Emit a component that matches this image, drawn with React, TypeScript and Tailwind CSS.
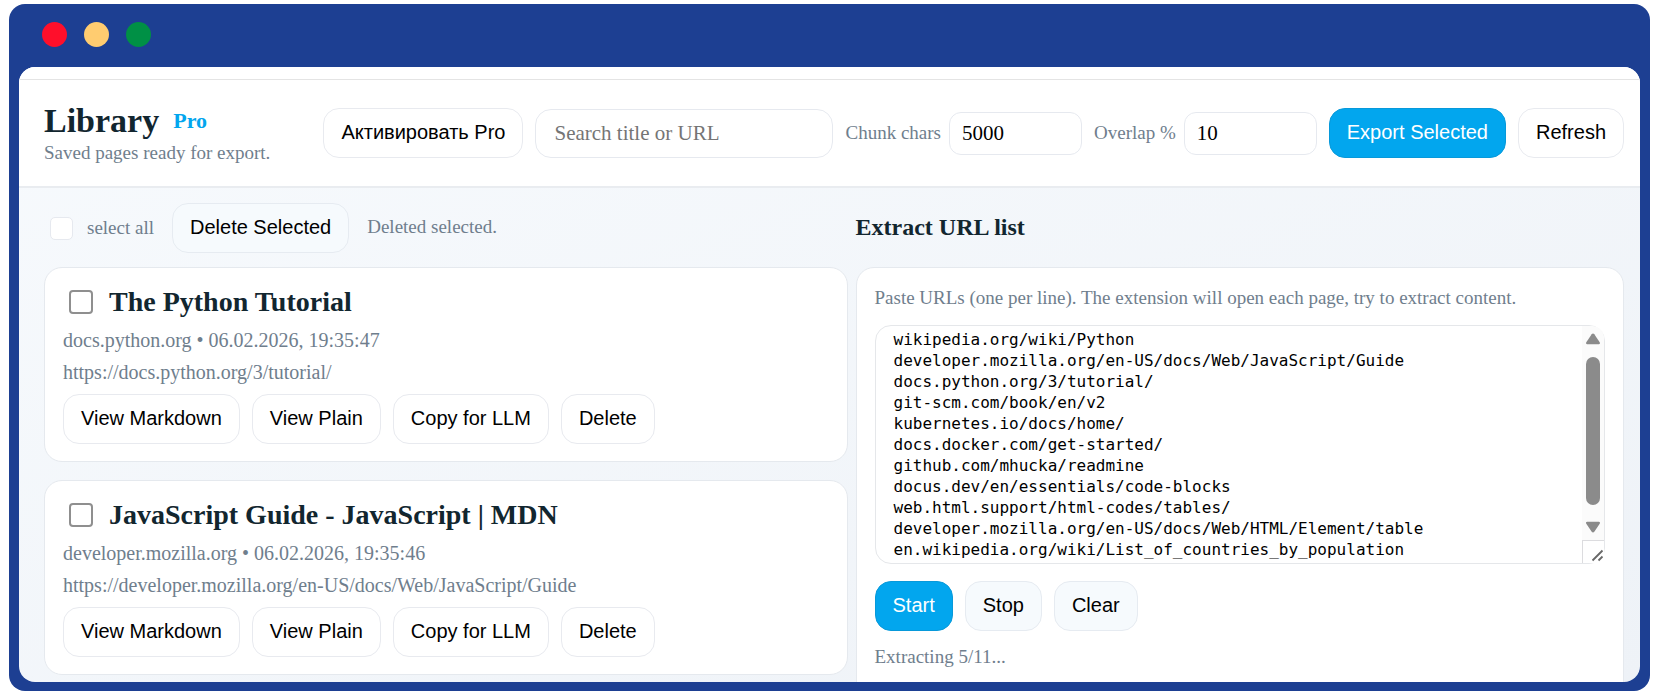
import { useState } from 'react'
import clsx from 'clsx'

interface SavedPage {
  id: string
  title: string
  host: string
  savedAt: string
  url: string
}

const PAGES: SavedPage[] = [
  {
    id: 'python',
    title: 'The Python Tutorial',
    host: 'docs.python.org',
    savedAt: '06.02.2026, 19:35:47',
    url: 'https://docs.python.org/3/tutorial/',
  },
  {
    id: 'mdn',
    title: 'JavaScript Guide - JavaScript | MDN',
    host: 'developer.mozilla.org',
    savedAt: '06.02.2026, 19:35:46',
    url: 'https://developer.mozilla.org/en-US/docs/Web/JavaScript/Guide',
  },
]

const URLS = [
  'wikipedia.org/wiki/Python',
  'developer.mozilla.org/en-US/docs/Web/JavaScript/Guide',
  'docs.python.org/3/tutorial/',
  'git-scm.com/book/en/v2',
  'kubernetes.io/docs/home/',
  'docs.docker.com/get-started/',
  'github.com/mhucka/readmine',
  'docus.dev/en/essentials/code-blocks',
  'web.html.support/html-codes/tables/',
  'developer.mozilla.org/en-US/docs/Web/HTML/Element/table',
  'en.wikipedia.org/wiki/List_of_countries_by_population',
].join('\n')

type Variant = 'plain' | 'tinted' | 'primary'

function Button({
  children,
  variant = 'plain',
  onClick,
}: {
  children: string
  variant?: Variant
  onClick?: () => void
}) {
  return (
    <button
      type="button"
      onClick={onClick}
      className={clsx(
        "h-[50px] shrink-0 whitespace-nowrap rounded-2xl border px-[17px] pb-0.5 font-['Liberation_Sans',Arial,sans-serif] text-[20px]",
        variant === 'plain' && 'border-[#e8eaef] bg-white text-black',
        variant === 'tinted' && 'border-[#e6ebf1] bg-[#f6fafd] text-black',
        variant === 'primary' && 'border-[#0799da] bg-[#02a6ee] text-white',
      )}
    >
      {children}
    </button>
  )
}

function NumberField({
  id,
  label,
  value,
  onChange,
}: {
  id: string
  label: string
  value: string
  onChange: (v: string) => void
}) {
  return (
    <div className="flex shrink-0 items-center gap-2">
      <label htmlFor={id} className="whitespace-nowrap text-[19px] text-[#6f7e8d]">
        {label}
      </label>
      <input
        id={id}
        value={value}
        onChange={(e) => onChange(e.target.value)}
        className="h-[43px] w-[133px] rounded-xl border border-[#e6e9ef] bg-white px-3 text-[21px] text-black"
      />
    </div>
  )
}

function PageCard({ page }: { page: SavedPage }) {
  return (
    <article className="rounded-[18px] border border-[#e5e9ee] bg-white px-[18px] pb-[17px] pt-4">
      <div className="flex h-9 items-center gap-4 pl-1.5">
        <input
          type="checkbox"
          id={page.id}
          className="size-6 shrink-0 appearance-none rounded-[4px] border-2 border-[#8f8f8f] bg-white"
        />
        <label htmlFor={page.id} className="text-[28px] font-bold text-[#12262f]">
          {page.title}
        </label>
      </div>
      <p className="mt-1 text-[20px] leading-8 text-[#6f7e8d]">
        {page.host} • {page.savedAt}
      </p>
      <p className="text-[20px] leading-8 text-[#6f7e8d]">{page.url}</p>
      <div className="mt-1.5 flex gap-3">
        <Button>View Markdown</Button>
        <Button>View Plain</Button>
        <Button>Copy for LLM</Button>
        <Button>Delete</Button>
      </div>
    </article>
  )
}

function Scrollbar() {
  return (
    <div className="absolute inset-y-px right-px flex w-[22px] flex-col rounded-tr-xl bg-[#fbfbfb]">
      <div className="flex flex-1 flex-col items-center justify-between py-[7px]">
        <svg width="16" height="12" viewBox="0 0 16 12" fill="#8b8b8b">
          <path d="M8 0.5c.5 0 .9.3 1.300.8l5.400 8c.6 1 .2 1.900-.9 1.900H2.200c-1.100 0-1.500-.9-.9-1.900l5.400-8C7.100.8 7.500.5 8 .5z" />
        </svg>
        <div className="mb-3 mt-3 w-3.5 flex-1 rounded-full bg-[#8b8b8b]" />
        <svg width="16" height="12" viewBox="0 0 16 12" fill="#8b8b8b" className="mt-1">
          <path d="M8 11.500c-.5 0-.9-.3-1.300-.8l-5.400-8C.7 1.700 1.100.8 2.200.8h11.600c1.100 0 1.500.9.9 1.900l-5.400 8c-.4.500-.8.800-1.300.8z" />
        </svg>
      </div>
      <div className="h-[23px] border-l border-t border-[#dcdcdf] bg-white">
        <svg width="21" height="21" viewBox="0 0 21 21" stroke="#686868" strokeWidth="1.8">
          <path d="M9.500 19.500L19.500 9.500M15.500 19.500L19.500 15.500" />
        </svg>
      </div>
    </div>
  )
}

export default function App() {
  const [query, setQuery] = useState('')
  const [chunk, setChunk] = useState('5000')
  const [overlap, setOverlap] = useState('10')
  const [urls, setUrls] = useState(URLS)

  return (
    <div className="h-screen overflow-hidden bg-white pb-[7px] pl-[9px] pr-1.5 pt-1 font-[Georgia,'Liberation_Serif',serif]">
      <div className="flex h-full flex-col rounded-2xl bg-[#1d3f92] px-2.5 pb-[9px]">
        <div className="flex h-[63px] shrink-0 items-center gap-[17px] pb-0.5 pl-[23px]">
          <span className="size-[25px] rounded-full bg-[#ff0f2b]" />
          <span className="size-[25px] rounded-full bg-[#ffcc70]" />
          <span className="size-[25px] rounded-full bg-[#009045]" />
        </div>

        <div className="min-h-0 flex-1 overflow-hidden rounded-2xl bg-linear-to-br from-[#f7fafd] to-[#eef2f7]">
          <div className="h-3 bg-white" />
          <header className="flex h-[109px] items-center gap-3 border-b-2 border-t border-b-[#e9ecf0] border-t-[#e4e4e4] bg-white pl-[25px] pr-4">
            <div className="mr-auto pt-1">
              <div className="flex items-center gap-3.5">
                <h1 className="text-[34px] font-bold leading-9 text-[#12262f]">Library</h1>
                <span className="text-[22px] font-bold leading-9 text-[#02a6ee]">Pro</span>
              </div>
              <p className="whitespace-nowrap text-[19px] leading-7 text-[#6f7e8d]">
                Saved pages ready for export.
              </p>
            </div>
            <Button>Активировать Pro</Button>
            <input
              type="search"
              aria-label="Search"
              value={query}
              onChange={(e) => setQuery(e.target.value)}
              placeholder="Search title or URL"
              className="h-[49px] w-[298px] min-w-0 rounded-2xl border border-[#e6e9ef] bg-white px-[18px] text-[21px] text-black placeholder:text-[#757575]"
            />
            <NumberField id="chunk" label="Chunk chars" value={chunk} onChange={setChunk} />
            <NumberField id="overlap" label="Overlap %" value={overlap} onChange={setOverlap} />
            <Button variant="primary">Export Selected</Button>
            <Button>Refresh</Button>
          </header>

          <main className="grid grid-cols-[803fr_768fr] gap-x-2 pl-[25px] pr-4 pt-[15px]">
            <section>
              <div className="mb-3.5 flex h-[50px] items-center pl-1.5 text-[19px] text-[#6f7e8d]">
                <input
                  type="checkbox"
                  id="select-all"
                  className="size-[23px] appearance-none rounded-[5px] border border-[#e6e9ef] bg-white"
                />
                <label htmlFor="select-all" className="ml-3.5 mr-[18px]">
                  select all
                </label>
                <Button variant="tinted">Delete Selected</Button>
                <span className="ml-[18px] pb-0.5">Deleted selected.</span>
              </div>
              <div className="flex flex-col gap-[18px]">
                {PAGES.map((page) => (
                  <PageCard key={page.id} page={page} />
                ))}
              </div>
            </section>

            <section>
              <h2 className="mb-3.5 flex h-[50px] items-center pb-0.5 text-[24px] font-bold text-[#12262f]">
                Extract URL list
              </h2>
              <div className="rounded-[18px] border border-[#e5e9ee] bg-white px-[18px] pb-10 pt-4">
                <label htmlFor="urls" className="block text-[19px] leading-7 text-[#6f7e8d]">
                  Paste URLs (one per line). The extension will open each page, try to extract content.
                </label>
                <div className="relative mt-[13px]">
                  <textarea
                    id="urls"
                    value={urls}
                    onChange={(e) => setUrls(e.target.value)}
                    wrap="off"
                    className="block h-[239px] w-full resize-none overflow-hidden rounded-2xl border border-[#e5e7ea] bg-white px-[18px] pt-[3px] font-['DejaVu_Sans_Mono',monospace] text-[16px] leading-[21px] text-black"
                  />
                  <Scrollbar />
                </div>
                <div className="mt-[17px] flex gap-3">
                  <Button variant="primary">Start</Button>
                  <Button variant="tinted">Stop</Button>
                  <Button variant="tinted" onClick={() => setUrls('')}>
                    Clear
                  </Button>
                </div>
                <p className="mt-3 text-[19px] leading-7 text-[#6f7e8d]">Extracting 5/11...</p>
              </div>
            </section>
          </main>
        </div>
      </div>
    </div>
  )
}
